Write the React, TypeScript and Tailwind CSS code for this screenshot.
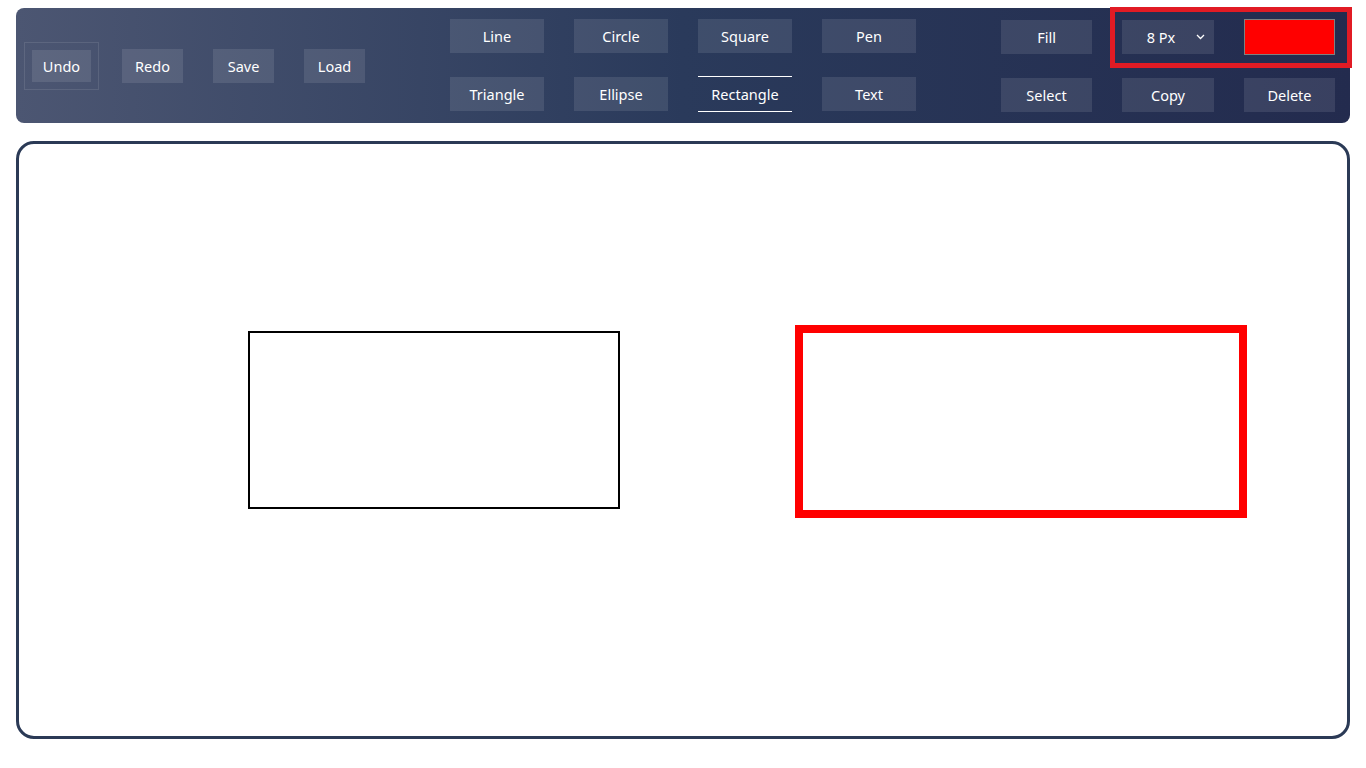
import React from "react";

const btn = "flex items-center justify-center bg-white/10 text-white text-[14.5px] leading-none";

export default function App() {
  const shapes = ["Line", "Circle", "Square", "Pen", "Triangle", "Ellipse", "Rectangle", "Text"];
  return (
    <div className="w-[1366px] h-[768px] bg-white" style={{ fontFamily: '"Noto Sans", "Open Sans", sans-serif' }}>
      <div className="pt-2 px-4">
        <div className="relative flex h-[115px] rounded-lg bg-gradient-to-r from-[#4c5672] via-[#2a3a5b] to-[#232b4e]">
          {/* left group */}
          <div className="flex items-center pl-[15px] gap-[30px] mt-[1px]">
            <div className="p-[1px] outline outline-1 outline-white/10 outline-offset-[6px]">
              <div className={`${btn} w-[59px] h-[32px]`}>Undo</div>
            </div>
            <div className={`${btn} w-[61px] h-[34px]`}>Redo</div>
            <div className={`${btn} w-[61px] h-[34px]`}>Save</div>
            <div className={`${btn} w-[61px] h-[34px]`}>Load</div>
          </div>
          {/* shapes */}
          <div className="ml-[85px] mt-[11px] grid grid-cols-[94px_94px_94px_94px] gap-x-[30px] gap-y-[24px] h-fit">
            {shapes.map((s) =>
              s === "Rectangle" ? (
                <div key={s} className="flex items-center justify-center h-[36px] -my-[1px] border-y border-white text-white text-[14.5px] leading-none">
                  {s}
                </div>
              ) : (
                <div key={s} className={`${btn} h-[34px]`}>{s}</div>
              )
            )}
          </div>
          {/* right group */}
          <div className="ml-[85px] mt-[12px] grid grid-cols-[91px_92px_91px] gap-x-[30px] gap-y-[24px] h-fit">
            <div className={`${btn} h-[34px]`}>Fill</div>
            <div className={`${btn} h-[34px] relative`}>
              <span className="ml-[-14px]">8 Px</span>
              <svg className="absolute right-[9px] top-[14px]" width="9" height="6" viewBox="0 0 9 6" fill="none">
                <path d="M1 1 L4.5 4.5 L8 1" stroke="white" strokeWidth="1.3" />
              </svg>
            </div>
            <div className="h-[36px] -my-[1px] bg-[#ff0000] border border-[#808080]"></div>
            <div className={`${btn} h-[34px]`}>Select</div>
            <div className={`${btn} h-[34px]`}>Copy</div>
            <div className={`${btn} h-[34px]`}>Delete</div>
          </div>
          {/* annotation overlay */}
          <div className="absolute left-[1094px] top-[-1px] w-[242px] h-[61px] border-[5px] border-[#e11b24] pointer-events-none"></div>
        </div>
      </div>
      <div className="px-4 mt-[18px]">
        <div className="relative h-[598px] rounded-[18px] border-[3px] border-[#2b3a56] bg-white">
          <div className="absolute left-[229px] top-[187px] w-[372px] h-[178px] border-2 border-black"></div>
          <div className="absolute left-[776px] top-[181px] w-[452px] h-[193px] border-[8px] border-[#ff0000]"></div>
        </div>
      </div>
    </div>
  );
}
